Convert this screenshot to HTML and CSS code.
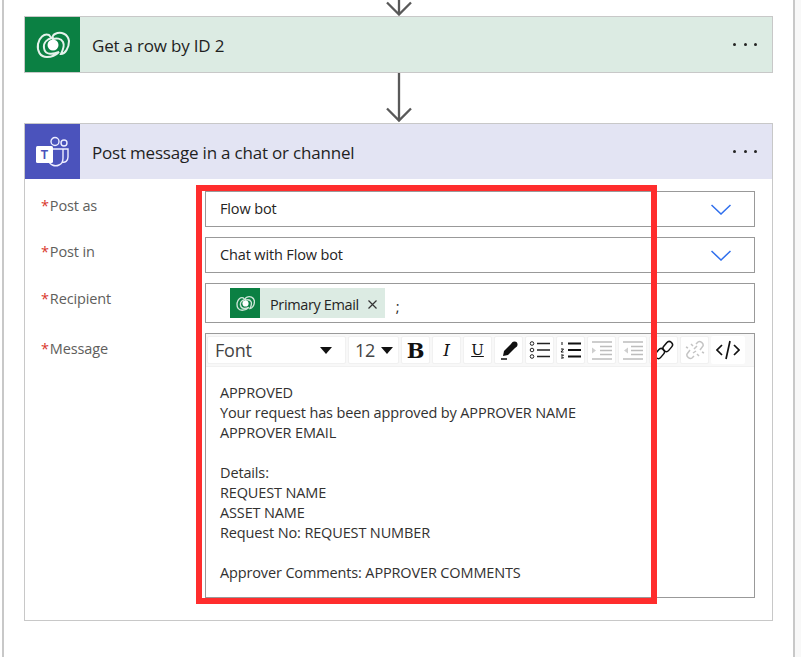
FILE: index.html
```html
<!DOCTYPE html>
<html lang="en">
<head>
<meta charset="utf-8">
<title>Flow</title>
<link rel="stylesheet" href="styles.css">
</head>
<body>
<main class="canvas">
  <svg class="connector" width="30" height="16" viewBox="0 0 30 16"><path d="M15 0V14.500M3 2.500L15 14.500L27 2.500" fill="none" stroke="#595959" stroke-width="2.300"/></svg>
  <section class="card">
    <header class="card-head head-green">
      <div class="card-icon icon-green">
        <svg width="34" height="30" viewBox="0 0 34 30"><g fill="none" stroke="#e6f2ec" stroke-width="2"><path d="M13 5C8 3 3 8 2 14C1 21 4 27 11 27C16 27 20 25 23 22C18 24 9 26 8 18C7 12 12 9 16 8C14 7 14 6 13 5Z"/><path d="M19 4C25 1 32 4 33 11C33 18 29 24 25 24C27 20 29 16 27 12C25 8 20 8 17 9C16 7 17 5 19 4Z"/></g><circle cx="17" cy="15" r="5.500" fill="#fff"/></svg>
      </div>
      <h2 class="card-title">Get a row by ID 2</h2>
      <div class="dots"><i></i><i></i><i></i></div>
    </header>
  </section>
  <svg class="connector connector-mid" width="30" height="50" viewBox="0 0 30 50"><path d="M15 0V47.500M3 35.500L15 47.500L27 35.500" fill="none" stroke="#595959" stroke-width="2.300"/></svg>
  <section class="card card-form">
    <header class="card-head head-purple">
      <div class="card-icon icon-purple">
        <svg width="36" height="32" viewBox="0 0 36 32"><g fill="none" stroke="#eef" stroke-width="1.400"><circle cx="20" cy="5.500" r="4"/><circle cx="29" cy="7" r="3"/><path d="M14 13H33V21C33 25 30 27 27 26"/><path d="M13 20V23C14 29 20 31 24 29C27 28 28 25 28 22V13"/></g><rect x="1" y="10" width="17" height="17" rx="1.500" fill="#fff"/><text class="teams-t" x="9.500" y="23">T</text></svg>
      </div>
      <h2 class="card-title">Post message in a chat or channel</h2>
      <div class="dots"><i></i><i></i><i></i></div>
    </header>
    <div class="form">
      <div class="row">
        <label class="field-label"><span class="req">*</span>Post as</label>
        <div class="input select"><span>Flow bot</span>
          <svg class="chev" width="20" height="11" viewBox="0 0 20 11"><path d="M0.500 1L10 10L19.500 1" fill="none" stroke="#2f6fed" stroke-width="1.500"/></svg>
        </div>
      </div>
      <div class="row">
        <label class="field-label"><span class="req">*</span>Post in</label>
        <div class="input select"><span>Chat with Flow bot</span>
          <svg class="chev" width="20" height="11" viewBox="0 0 20 11"><path d="M0.500 1L10 10L19.500 1" fill="none" stroke="#2f6fed" stroke-width="1.500"/></svg>
        </div>
      </div>
      <div class="row">
        <label class="field-label label-low"><span class="req">*</span>Recipient</label>
        <div class="input recipient">
          <div class="token">
            <div class="token-icon">
              <svg width="19" height="17" viewBox="0 0 34 30"><g fill="none" stroke="#cfe5d9" stroke-width="2.400"><path d="M13 5C8 3 3 8 2 14C1 21 4 27 11 27C16 27 20 25 23 22C18 24 9 26 8 18C7 12 12 9 16 8C14 7 14 6 13 5Z"/><path d="M19 4C25 1 32 4 33 11C33 18 29 24 25 24C27 20 29 16 27 12C25 8 20 8 17 9C16 7 17 5 19 4Z"/></g><circle cx="17" cy="15" r="5.500" fill="#fff"/></svg>
            </div>
            <span class="token-text">Primary Email</span>
            <svg class="token-x" width="9" height="9" viewBox="0 0 9 9"><path d="M0.500 0.500L8.500 8.500M8.500 0.500L0.500 8.500" stroke="#333" stroke-width="1.200"/></svg>
          </div>
          <span class="semi">;</span>
        </div>
      </div>
      <div class="row">
        <label class="field-label label-low"><span class="req">*</span>Message</label>
        <div class="editor">
          <div class="toolbar">
            <div class="tool tool-font"><span class="tool-value">Font</span><i class="caret"></i></div>
            <div class="tool tool-size"><span class="tool-value">12</span><i class="caret"></i></div>
            <div class="tool"><b class="glyph-b">B</b></div>
            <div class="tool"><em class="glyph-i">I</em></div>
            <div class="tool"><span class="glyph-u">U</span></div>
            <div class="tool">
              <svg width="20" height="20" viewBox="0 0 20 20"><path d="M13 3L17 7L9 15L4 16L5 11Z" fill="#111"/><circle cx="15.500" cy="4.500" r="3" fill="#111"/><path d="M2 19H8" stroke="#111" stroke-width="1.500"/></svg>
            </div>
            <div class="tool">
              <svg width="22" height="18" viewBox="0 0 22 18"><g fill="none" stroke="#222" stroke-width="1"><circle cx="3" cy="2.500" r="1.800"/><circle cx="3" cy="9" r="1.800"/><circle cx="3" cy="15.500" r="1.800"/></g><path d="M8 2.500H21M8 9H21M8 15.500H21" stroke="#222" stroke-width="1.500"/></svg>
            </div>
            <div class="tool">
              <svg width="22" height="18" viewBox="0 0 22 18"><path d="M2 1V4M1 8H3.500L1 11H3.500M1 14H3.500L2 15.500L3.500 17H1" fill="none" stroke="#111" stroke-width="1"/><path d="M8 2.500H21M8 9H21M8 15.500H21" stroke="#111" stroke-width="2"/></svg>
            </div>
            <div class="tool">
              <svg width="22" height="19" viewBox="0 0 22 19"><path d="M1 1H21M9 5.500H21M9 9.500H21M9 13.500H21M1 18H21" stroke="#bdbdbd" stroke-width="1.500"/><path d="M1 6.500L5 9.500L1 12.500Z" fill="#cfcfcf"/></svg>
            </div>
            <div class="tool">
              <svg width="22" height="19" viewBox="0 0 22 19"><path d="M1 1H21M9 5.500H21M9 9.500H21M9 13.500H21M1 18H21" stroke="#bdbdbd" stroke-width="1.500"/><path d="M6 6.500L2 9.500L6 12.500Z" fill="#cfcfcf"/></svg>
            </div>
            <div class="tool">
              <svg width="20" height="20" viewBox="0 0 20 20"><g fill="none" stroke="#111" stroke-width="1.500"><rect x="10.500" y="1" width="6.500" height="11" rx="3.200" transform="rotate(40 13.700 6.500)"/><rect x="2.500" y="8" width="6.500" height="11" rx="3.200" transform="rotate(40 5.700 13.500)"/></g></svg>
            </div>
            <div class="tool">
              <svg width="20" height="20" viewBox="0 0 20 20"><g fill="none" stroke="#c4c4c4" stroke-width="1.500"><path d="M11 4L13 2C15 0.500 19 3 18 6L15 10"/><path d="M9 16L7 18C5 19.500 1 17 2 14L5 10"/><path d="M8 6L6 4M12 14L14 16M3 8L1 7M17 12L19 13"/><path d="M9 9L12 6M8 13L11 11"/></g></svg>
            </div>
            <div class="tool tool-code">
              <svg width="24" height="20" viewBox="0 0 24 20"><path d="M6 5L1 10L6 15M18 5L23 10L18 15M14 1L10 19" fill="none" stroke="#111" stroke-width="1.700"/></svg>
            </div>
          </div>
          <div class="message">
            <p>APPROVED</p>
            <p>Your request has been approved by APPROVER NAME</p>
            <p>APPROVER EMAIL</p>
            <p class="blank"></p>
            <p>Details:</p>
            <p>REQUEST NAME</p>
            <p>ASSET NAME</p>
            <p>Request No: REQUEST NUMBER</p>
            <p class="blank"></p>
            <p>Approver Comments: APPROVER COMMENTS</p>
          </div>
        </div>
      </div>
    </div>
  </section>
</main>
<div class="scroll-track"></div>
<div class="highlight"></div>
</body>
</html>
```

FILE: styles.css
```css
* { box-sizing: border-box; }
html, body { margin: 0; padding: 0; }
body {
  width: 801px;
  height: 657px;
  overflow: hidden;
  position: relative;
  display: flex;
  background: #fff;
  font-family: "Open Sans", "Noto Sans", sans-serif;
  color: #252423;
}
.canvas {
  width: 793px;
  height: 657px;
  margin-left: 2px;
  padding: 0 20px;
  border-left: 2px solid #c8c8c8;
  border-right: 2px solid #c8c8c8;
  display: flex;
  flex-direction: column;
  align-items: stretch;
  flex: none;
}
.scroll-track { flex: 1; background: #f8f8f8; }
.connector { display: block; align-self: center; flex: none; }
.connector-mid { height: 50px; }
.card { border: 1px solid #c8c8c8; flex: none; }
.card-head { display: flex; align-items: center; height: 55px; }
.head-green { background: #dcebe3; }
.head-purple { background: #e3e4f3; }
.card-icon { width: 55px; height: 55px; display: flex; align-items: center; justify-content: center; flex: none; }
.icon-green { background: #0b8043; }
.icon-purple { background: #4b53bc; }
.teams-t { font: 700 12px "Liberation Sans", sans-serif; fill: #4b53bc; text-anchor: middle; }
.card-title {
  margin: 2px 0 0 12px;
  flex: 1;
  font-size: 17px;
  font-weight: 400;
  letter-spacing: -0.2px;
  color: #1f1f1f;
}
.dots { display: flex; gap: 7.500px; margin-right: 15px; }
.dots i { width: 3px; height: 3px; border-radius: 50%; background: #252423; }
.form { padding: 12px 17px 22px 0; display: flex; flex-direction: column; gap: 10px; height: 441px; }
.row { display: flex; }
.field-label { width: 180px; padding-left: 16px; padding-top: 5px; font-size: 14.500px; line-height: 20px; color: #605e5c; flex: none; letter-spacing: -0.14px; }
.label-low { padding-top: 6px; }
.req { color: #d9342b; margin-right: 1px; }
.input {
  flex: 1;
  border: 1px solid #999;
  height: 36px;
  font-size: 14.500px;
  letter-spacing: -0.14px;
  display: flex;
  align-items: center;
  padding-left: 14px;
}
.select { justify-content: space-between; padding-right: 23px; padding-bottom: 2px; }
.chev { display: block; margin-top: 2px; }
.recipient { height: 40px; padding-left: 24px; }
.token { display: flex; align-items: center; height: 30px; background: #dcebe3; }
.token-icon { width: 30px; height: 30px; background: #0b8043; display: flex; align-items: center; justify-content: center; }
.token-text { margin-left: 10px; margin-top: 2px; color: #252423; letter-spacing: -0.37px; }
.token-x { margin: 3px 8px 0 9px; }
.semi { margin-left: 11px; margin-top: 7px; }
.editor { flex: 1; border: 1px solid #999; height: 265px; }
.toolbar { height: 33px; padding: 2px 1px 0; background: #f8f8f8; border-bottom: 1px solid #f1f1f1; display: flex; gap: 2px; margin-bottom: 16px; }
.tool {
  width: 29px;
  height: 28px;
  background: #fff;
  border: 1px solid #f1f1f1;
  border-radius: 2px;
  display: flex;
  align-items: center;
  justify-content: center;
  flex: none;
}
.tool-font { width: 139px; justify-content: space-between; padding: 0 13px 0 7px; }
.tool-size { width: 51px; justify-content: space-between; padding: 0 5px 0 6px; }
.tool-code { border: 0; width: 34px; }
.tool-value { font-size: 18px; color: #444; letter-spacing: -0.2px; }
.caret { width: 0; height: 0; border-left: 6.500px solid transparent; border-right: 6.500px solid transparent; border-top: 7px solid #111; }
.glyph-b { font: 700 21px "DejaVu Serif", serif; color: #111; }
.glyph-i { font: italic 400 17px "DejaVu Serif", serif; color: #111; }
.glyph-u { font: 400 15px "DejaVu Serif", serif; text-decoration: underline; color: #111; }
.message { padding-left: 14px; font-size: 14.500px; line-height: 20px; letter-spacing: -0.14px; color: #323130; }
.message p { margin: 0; height: 20px; }
.highlight {
  position: absolute;
  left: 196px;
  top: 185px;
  width: 461px;
  height: 419px;
  border: 6px solid #ff2d2d;
  pointer-events: none;
}
```
